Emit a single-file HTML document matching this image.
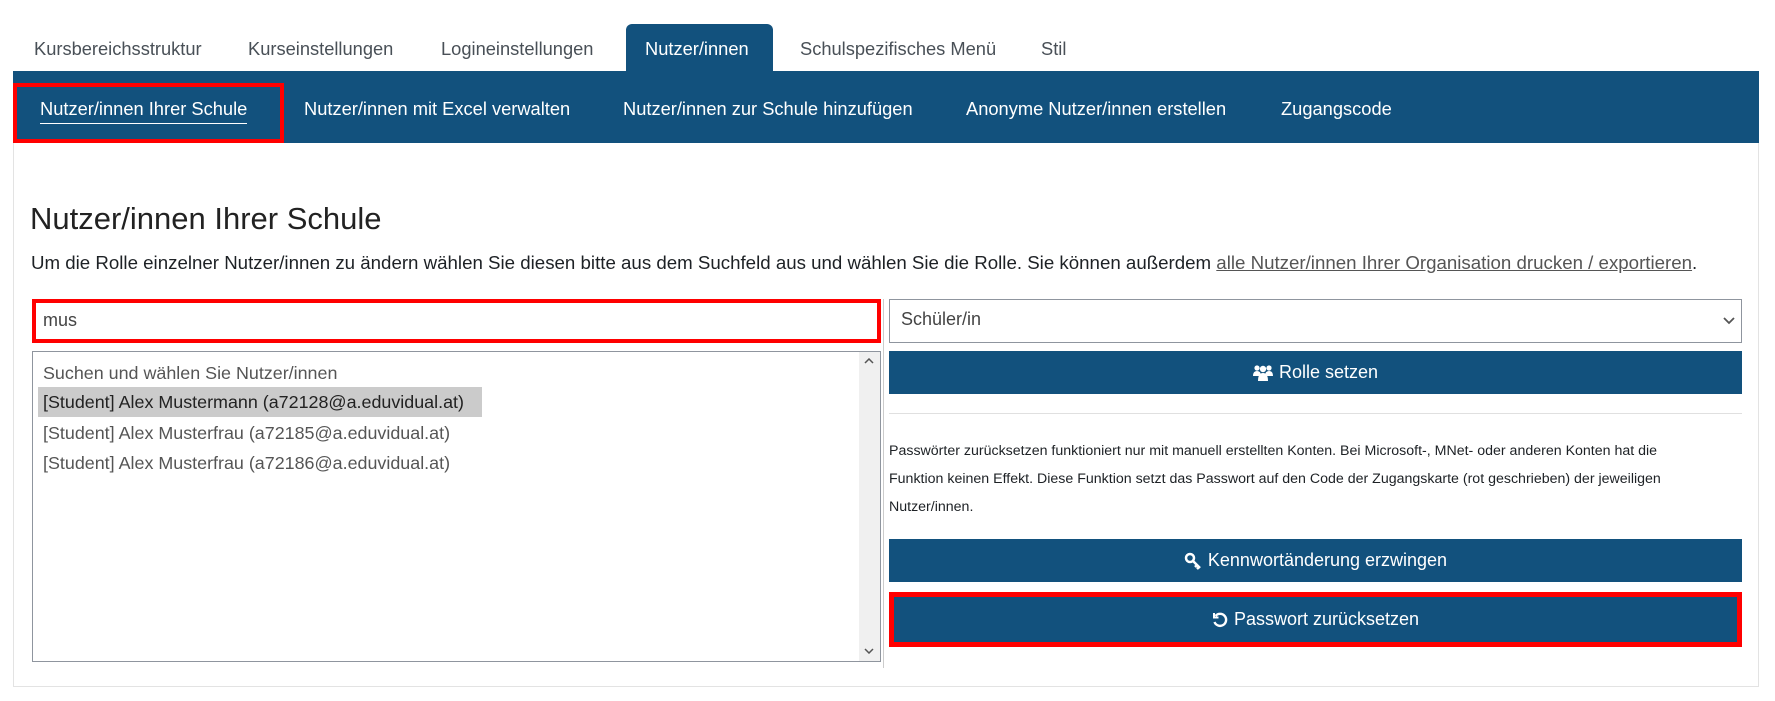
<!DOCTYPE html>
<html><head><meta charset="utf-8"><style>
*{box-sizing:border-box;margin:0;padding:0}
body{width:1775px;height:701px;background:#fff;font-family:"Liberation Sans",sans-serif;color:#1d2125;position:relative;overflow:hidden}
.a{position:absolute;white-space:nowrap}
.tab{font-size:18.3px;color:#495057;top:38px}
.blue{background:#12517d}
.sub{color:#fff;font-size:18.3px;top:98px}
.btn{position:absolute;left:889px;width:853px;background:#12517d;color:#fff;font-size:18px;display:flex;align-items:center;justify-content:center;gap:6px}
.item{position:absolute;left:38px;font-size:17.9px;color:#555;height:30px;line-height:30px;padding-left:5px}
</style></head><body>
<div class="a tab" style="left:34px">Kursbereichsstruktur</div>
<div class="a tab" style="left:248px">Kurseinstellungen</div>
<div class="a tab" style="left:441px">Logineinstellungen</div>
<div class="a blue" style="left:626px;top:24px;width:147px;height:48px;border-radius:6px 6px 0 0"></div>
<div class="a tab" style="left:645px;color:#fff">Nutzer/innen</div>
<div class="a tab" style="left:800px">Schulspezifisches Menü</div>
<div class="a tab" style="left:1041px">Stil</div>
<div class="a blue" style="left:13px;top:71px;width:1746px;height:72px"></div>
<div class="a" style="left:13px;top:83px;width:271px;height:60px;border:4px solid #f00"></div>
<div class="a sub" style="left:40px;border-bottom:1px solid #fff;padding-bottom:3px">Nutzer/innen Ihrer Schule</div>
<div class="a sub" style="left:304px">Nutzer/innen mit Excel verwalten</div>
<div class="a sub" style="left:623px">Nutzer/innen zur Schule hinzufügen</div>
<div class="a sub" style="left:966px">Anonyme Nutzer/innen erstellen</div>
<div class="a sub" style="left:1281px">Zugangscode</div>
<div class="a" style="left:13px;top:143px;width:1746px;height:544px;border:1px solid #e3e3e3;border-top:none"></div>
<div class="a" style="left:30px;top:201px;font-size:31px;font-weight:300;color:#222">Nutzer/innen Ihrer Schule</div>
<div class="a" style="left:31px;top:252px;font-size:18.7px">Um die Rolle einzelner Nutzer/innen zu ändern wählen Sie diesen bitte aus dem Suchfeld aus und wählen Sie die Rolle. Sie können außerdem <span style="text-decoration:underline;color:#555">alle Nutzer/innen Ihrer Organisation drucken / exportieren</span>.</div>
<div class="a" style="left:32px;top:299px;width:849px;height:44px;border:4px solid #f00;background:#fff"></div>
<div class="a" style="left:43px;top:310px;font-size:18px;color:#444">mus</div>
<div class="a" style="left:32px;top:351px;width:849px;height:311px;border:1px solid #8f959e"></div>
<div class="a" style="left:859px;top:352px;width:21px;height:309px;background:#f0f0f0"></div>
<svg class="a" style="left:864px;top:358px" width="10" height="6" viewBox="0 0 10 6"><path d="M1 5l4-4 4 4" stroke="#555" stroke-width="1.5" fill="none"/></svg>
<svg class="a" style="left:864px;top:648px" width="10" height="6" viewBox="0 0 10 6"><path d="M1 1l4 4 4-4" stroke="#555" stroke-width="1.5" fill="none"/></svg>
<div class="item" style="top:358px">Suchen und wählen Sie Nutzer/innen</div>
<div class="item" style="top:387px;width:444px;background:#cbcbcb;color:#222">[Student] Alex Mustermann (a72128@a.eduvidual.at)</div>
<div class="item" style="top:418px">[Student] Alex Musterfrau (a72185@a.eduvidual.at)</div>
<div class="item" style="top:448px">[Student] Alex Musterfrau (a72186@a.eduvidual.at)</div>
<div class="a" style="left:883px;top:299px;width:1px;height:369px;background:#ccc"></div>
<div class="a" style="left:889px;top:299px;width:853px;height:44px;border:1px solid #8f959e"></div>
<div class="a" style="left:901px;top:309px;font-size:18px;color:#444">Schüler/in</div>
<svg class="a" style="left:1723px;top:317px" width="12" height="8" viewBox="0 0 12 8"><path d="M1 1l5 5 5-5" stroke="#555" stroke-width="1.8" fill="none"/></svg>
<div class="btn" style="top:351px;height:43px"><svg width="20" height="18" viewBox="0 0 20 18" fill="#fff"><circle cx="4" cy="4" r="2.6"/><circle cx="16" cy="4" r="2.6"/><circle cx="10" cy="5" r="3.2"/><path d="M0 12q0-5 4-5t4 5zM12 12q0-5 4-5t4 5zM5 17q0-8 5-8t5 8z"/></svg>Rolle setzen</div>
<div class="a" style="left:889px;top:413px;width:853px;height:1px;background:#e0e0e0"></div>
<div class="a" style="left:889px;top:437px;font-size:14.2px;line-height:28px;white-space:normal;width:800px">Passwörter zurücksetzen funktioniert nur mit manuell erstellten Konten. Bei Microsoft-, MNet- oder anderen Konten hat die Funktion keinen Effekt. Diese Funktion setzt das Passwort auf den Code der Zugangskarte (rot geschrieben) der jeweiligen Nutzer/innen.</div>
<div class="btn" style="top:539px;height:43px"><svg width="18" height="18" viewBox="0 0 18 18" fill="none" stroke="#fff" stroke-width="2.5"><circle cx="6" cy="6" r="4"/><path d="M9 9l7 7M13 13l-2 2M15 15l-2 2"/></svg>Kennwortänderung erzwingen</div>
<div class="a" style="left:889px;top:592px;width:853px;height:55px;background:#f00"></div>
<div class="btn" style="left:894px;width:843px;top:597px;height:45px"><svg width="16" height="16" viewBox="0 0 16 16" fill="none" stroke="#fff" stroke-width="2.4"><path d="M3.5 4A6 6 0 1 1 2.5 10"/><path d="M2 1v4.5h4.5" stroke-width="2"/></svg>Passwort zurücksetzen</div>
</body></html>
